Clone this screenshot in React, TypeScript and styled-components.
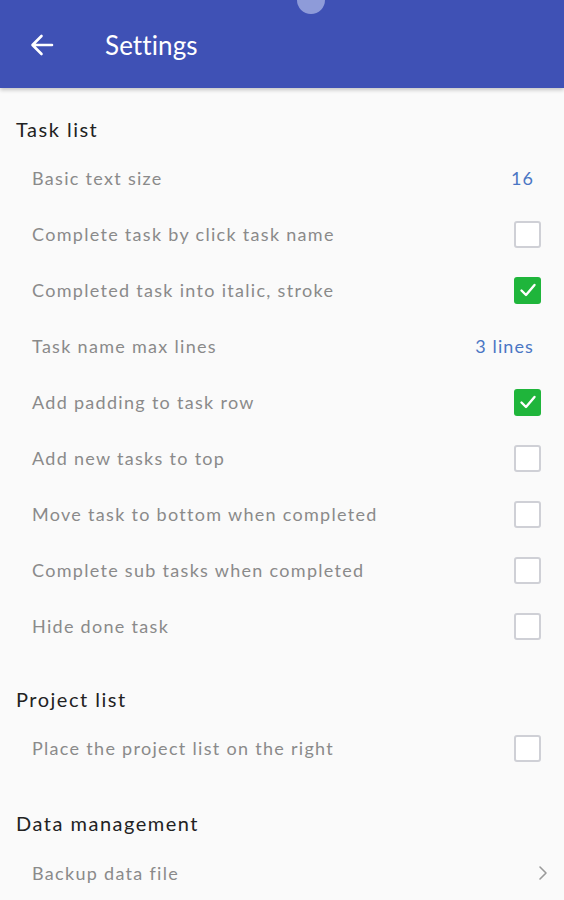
import React from "react";
import styled, { createGlobalStyle } from "styled-components";

const Global = createGlobalStyle`
  html, body { margin: 0; padding: 0; background: #fafafa; }
  body { font-family: Lato, "Open Sans", sans-serif; }
`;

const Page = styled.div`
  width: 564px;
  height: 900px;
  overflow: hidden;
  background: #fafafa;
`;

const AppBar = styled.header`
  position: relative;
  height: 88px;
  background: #3f51b5;
  display: flex;
  align-items: center;
  padding: 2px 0 0 28px;
  box-sizing: border-box;
  box-shadow: 0 2px 4px rgba(0, 0, 0, 0.22);
`;

const TouchDot = styled.div`
  position: absolute;
  left: 297px;
  top: -14px;
  width: 28px;
  height: 28px;
  border-radius: 50%;
  background: rgba(170, 180, 230, 0.75);
`;

const BackButton = styled.div`
  width: 28px;
  height: 28px;
  display: flex;
  align-items: center;
  justify-content: center;
  margin-right: 49px;
`;

const Title = styled.h1`
  margin: 0;
  color: #fff;
  font-size: 26px;
  font-weight: 400;
  letter-spacing: 0.1px;
`;

const SectionTitle = styled.div<{ $top: number; $bottom?: number }>`
  padding: ${(p) => p.$top}px 16px ${(p) => p.$bottom ?? 9}px;
  font-size: 20px;
  line-height: 24px;
  color: #222;
  letter-spacing: 1.5px;
`;

const Row = styled.div`
  height: 56px;
  display: flex;
  align-items: center;
  justify-content: space-between;
  padding: 0 22px 0 32px;
`;

const Label = styled.span`
  font-size: 18px;
  color: #8a8a8a;
  letter-spacing: 1.3px;
`;

const Value = styled.span`
  font-size: 18px;
  color: #4a76c4;
  letter-spacing: 1.1px;
  margin-right: 8px;
`;

const Box = styled.div<{ $checked?: boolean }>`
  width: 27px;
  height: 27px;
  box-sizing: border-box;
  border-radius: 3px;
  display: flex;
  align-items: center;
  justify-content: center;
  margin-right: 1px;
  background: ${(p) => (p.$checked ? "#1fb53b" : "#fff")};
  border: ${(p) => (p.$checked ? "none" : "2px solid #cfd0d6")};
`;

const Chevron = styled.div`
  margin-right: -8px;
  display: flex;
`;

function Check({ checked }: { checked?: boolean }) {
  return (
    <Box $checked={checked}>
      {checked && (
        <svg width="20" height="20" viewBox="0 0 20 20">
          <path d="M3.5 10.5 L8 15 L16.5 5" stroke="#fff" strokeWidth="2.4" fill="none" strokeLinecap="round" strokeLinejoin="round" />
        </svg>
      )}
    </Box>
  );
}

type Item = { label: string; value?: string; checked?: boolean; chevron?: boolean };

const taskItems: Item[] = [
  { label: "Basic text size", value: "16" },
  { label: "Complete task by click task name", checked: false },
  { label: "Completed task into italic, stroke", checked: true },
  { label: "Task name max lines", value: "3 lines" },
  { label: "Add padding to task row", checked: true },
  { label: "Add new tasks to top", checked: false },
  { label: "Move task to bottom when completed", checked: false },
  { label: "Complete sub tasks when completed", checked: false },
  { label: "Hide done task", checked: false },
];

function SettingRow({ item }: { item: Item }) {
  return (
    <Row>
      <Label>{item.label}</Label>
      {item.value !== undefined ? (
        <Value>{item.value}</Value>
      ) : item.chevron ? (
        <Chevron>
          <svg width="14" height="20" viewBox="0 0 14 20">
            <path d="M4 4 L10 10 L4 16" stroke="#9a9a9a" strokeWidth="1.6" fill="none" strokeLinecap="round" strokeLinejoin="round" />
          </svg>
        </Chevron>
      ) : (
        <Check checked={item.checked} />
      )}
    </Row>
  );
}

export default function App() {
  return (
    <Page>
      <Global />
      <AppBar>
        <TouchDot />
        <BackButton>
          <svg width="26" height="26" viewBox="0 0 26 26">
            <path d="M23 13 H4 M12.5 4 L3.5 13 L12.5 22" stroke="#fff" strokeWidth="2.6" fill="none" strokeLinecap="round" strokeLinejoin="round" />
          </svg>
        </BackButton>
        <Title>Settings</Title>
      </AppBar>
      <SectionTitle $top={29}>Task list</SectionTitle>
      {taskItems.map((it) => (
        <SettingRow key={it.label} item={it} />
      ))}
      <SectionTitle $top={33}>Project list</SectionTitle>
      <SettingRow item={{ label: "Place the project list on the right", checked: false }} />
      <SectionTitle $top={35} $bottom={10}>Data management</SectionTitle>
      <SettingRow item={{ label: "Backup data file", chevron: true }} />
    </Page>
  );
}
